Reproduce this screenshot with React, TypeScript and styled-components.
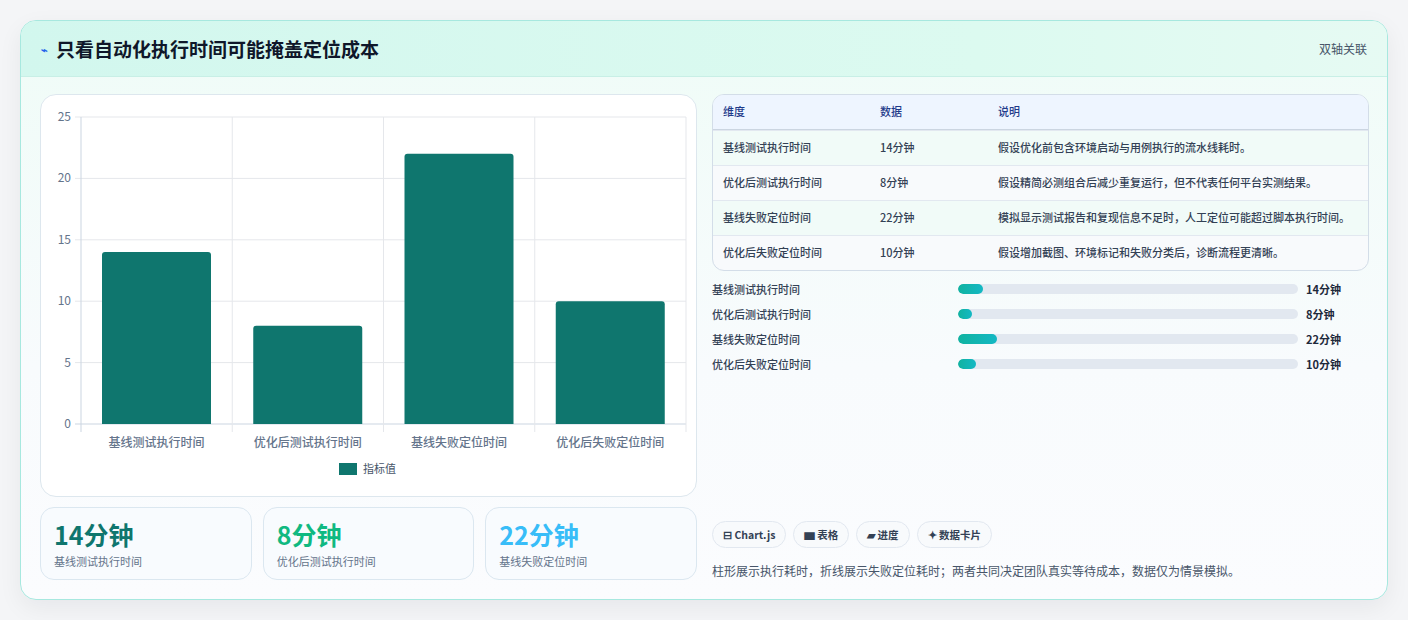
import styled, { createGlobalStyle } from 'styled-components';

const Global = createGlobalStyle`
  body {
    margin: 0;
    background: #f4f5f7;
    font-family: "Noto Sans CJK SC", "Noto Sans", sans-serif;
  }
`;

const Page = styled.div`
  padding: 20px;
  height: 620px;
  box-sizing: border-box;
`;

const Card = styled.section`
  height: 580px;
  box-sizing: border-box;
  border: 1px solid #a7e8df;
  border-radius: 16px;
  background: linear-gradient(180deg, #effcf7 0%, #f8fbfd 60%, #fbfcfe 100%);
  box-shadow: 0 8px 24px rgba(15, 23, 42, 0.06);
  overflow: hidden;
  display: flex;
  flex-direction: column;
`;

const Header = styled.header`
  height: 55px;
  flex: none;
  display: flex;
  align-items: center;
  justify-content: space-between;
  padding: 0 20px;
  background: linear-gradient(90deg, #d2f7ee 0%, #dcfaf0 70%, #e6faf3 100%);
  border-bottom: 1px solid #c8efe6;
`;

const Title = styled.h2`
  margin: 0;
  font-size: 19px;
  font-weight: 700;
  color: #0f172a;
  display: flex;
  align-items: center;
  gap: 8px;
`;

const Bolt = styled.span`
  font-size: 11px;
  color: #2563eb;
`;

const Tag = styled.span`
  font-size: 12px;
  color: #475569;
`;

const Body = styled.div`
  flex: 1;
  display: grid;
  grid-template-columns: 657px 657px;
  gap: 15px;
  padding: 17px 19px 19px 19px;
`;

const Col = styled.div`
  display: flex;
  flex-direction: column;
  gap: 10px;
  min-height: 0;
`;

const RightCol = styled(Col)`
  justify-content: space-between;
  gap: 0;
`;

const ChartCard = styled.div`
  height: 403px;
  box-sizing: border-box;
  background: #fff;
  border: 1px solid #dde7ee;
  border-radius: 16px;
`;

const Stats = styled.div`
  display: grid;
  grid-template-columns: repeat(3, 1fr);
  gap: 11px;
`;

const Stat = styled.div`
  height: 73px;
  box-sizing: border-box;
  border: 1px solid #dbe7f0;
  border-radius: 14px;
  background: #f8fbfe;
  padding: 10px 13px;
`;

const StatValue = styled.div<{ $c: string }>`
  font-size: 25px;
  font-weight: 700;
  line-height: 32px;
  color: ${(p) => p.$c};
`;

const StatLabel = styled.div`
  font-size: 11px;
  color: #64748b;
  margin-top: 3px;
`;

const Table = styled.div`
  border: 1px solid #d3dde8;
  border-radius: 12px;
  overflow: hidden;
  background: #f8fafc;
  font-size: 11px;
`;

const TRow = styled.div<{ $head?: boolean }>`
  display: grid;
  grid-template-columns: 157px 118px 1fr;
  padding: 8px 10px;
  line-height: 17px;
  min-height: 18px;
  align-items: start;
  color: ${(p) => (p.$head ? '#1e3a8a' : '#334155')};
  font-weight: ${(p) => (p.$head ? 500 : 500)};
  background: ${(p) => (p.$head ? '#eef5ff' : 'transparent')};
  border-top: ${(p) => (p.$head ? 'none' : '1px solid #e2e8f0')};
  &:nth-child(2), &:nth-child(4) { background: #f1fbf8; }
  ${(p) => p.$head && 'border-bottom: 1px solid #cbd5e1;'}
`;

const Bars = styled.div`
  margin-top: 8px;
  display: flex;
  flex-direction: column;
  gap: 6px;
`;

const BarRow = styled.div`
  display: grid;
  grid-template-columns: 246px 340px 1fr;
  gap: 0;
  align-items: center;
  height: 19px;
  font-size: 11px;
  font-weight: 500;
  color: #334155;
`;

const Track = styled.div`
  height: 10px;
  background: #e2e8f0;
  border-radius: 5px;
  overflow: hidden;
`;

const Fill = styled.div`
  height: 100%;
  border-radius: 5px;
  background: linear-gradient(90deg, #10b3a0, #14b8c4);
`;

const BarValue = styled.span`
  padding-left: 8px;
  font-weight: 700;
  color: #1e293b;
`;

const Chips = styled.div`
  display: flex;
  gap: 7px;
  margin-bottom: 14px;
`;

const Chip = styled.span`
  height: 27px;
  box-sizing: border-box;
  padding: 0 10px;
  border: 1px solid #e2e8f0;
  border-radius: 14px;
  background: #f8fafc;
  font-size: 10.5px;
  font-weight: 700;
  color: #334155;
  display: inline-flex;
  align-items: center;
  gap: 3px;
`;

const Note = styled.p`
  margin: 0 0 1px;
  font-size: 12px;
  color: #475569;
`;

const data = [
  { name: '基线测试执行时间', v: 14, note: '假设优化前包含环境启动与用例执行的流水线耗时。' },
  { name: '优化后测试执行时间', v: 8, note: '假设精简必测组合后减少重复运行，但不代表任何平台实测结果。' },
  { name: '基线失败定位时间', v: 22, note: '模拟显示测试报告和复现信息不足时，人工定位可能超过脚本执行时间。' },
  { name: '优化后失败定位时间', v: 10, note: '假设增加截图、环境标记和失败分类后，诊断流程更清晰。' },
];

function Chart() {
  const L = 40, R = 645, T = 22, B = 329;
  const y = (v: number) => B - ((B - T) * v) / 25;
  const cw = (R - L) / 4;
  return (
    <svg width="655" height="401" style={{ display: 'block' }} fontFamily='"Noto Sans CJK SC", sans-serif'>
      {[0, 5, 10, 15, 20, 25].map((t) => (
        <g key={t}>
          <line x1={L - 6} x2={R} y1={y(t)} y2={y(t)} stroke={t === 0 ? '#cbd5e1' : '#e5e7eb'} />
          <text x={L - 10} y={y(t) + 4} textAnchor="end" fontSize="12" fill="#64748b">{t}</text>
        </g>
      ))}
      {[0, 1, 2, 3, 4].map((i) => (
        <line key={i} x1={L + cw * i} x2={L + cw * i} y1={T} y2={B + 8} stroke={i === 0 ? '#cbd5e1' : '#e5e7eb'} />
      ))}
      {data.map((d, i) => (
        <g key={d.name}>
          <path
            d={`M${L + cw * i + 21} ${B} V${y(d.v) + 3} q0 -3 3 -3 H${L + cw * i + 127} q3 0 3 3 V${B} Z`}
            fill="#0f766e"
          />
          <text x={L + cw * i + cw / 2} y={B + 23} textAnchor="middle" fontSize="12" fontWeight="500" fill="#64748b">{d.name}</text>
        </g>
      ))}
      <rect x="298" y="368" width="18" height="12" fill="#0f766e" />
      <text x="322" y="378" fontSize="11" fill="#475569">指标值</text>
    </svg>
  );
}

export default function App() {
  return (
    <Page>
      <Global />
      <Card>
        <Header>
          <Title><Bolt>⌁</Bolt>只看自动化执行时间可能掩盖定位成本</Title>
          <Tag>双轴关联</Tag>
        </Header>
        <Body>
          <Col>
            <ChartCard><Chart /></ChartCard>
            <Stats>
              <Stat><StatValue $c="#0f766e">14分钟</StatValue><StatLabel>基线测试执行时间</StatLabel></Stat>
              <Stat><StatValue $c="#10b981">8分钟</StatValue><StatLabel>优化后测试执行时间</StatLabel></Stat>
              <Stat><StatValue $c="#38bdf8">22分钟</StatValue><StatLabel>基线失败定位时间</StatLabel></Stat>
            </Stats>
          </Col>
          <RightCol>
            <div>
              <Table>
                <TRow $head><span>维度</span><span>数据</span><span>说明</span></TRow>
                {data.map((d) => (
                  <TRow key={d.name}><span>{d.name}</span><span>{d.v}分钟</span><span>{d.note}</span></TRow>
                ))}
              </Table>
              <Bars>
                {data.map((d) => (
                  <BarRow key={d.name}>
                    <span>{d.name}</span>
                    <Track><Fill style={{ width: `${(d.v / 190) * 100}%` }} /></Track>
                    <BarValue>{d.v}分钟</BarValue>
                  </BarRow>
                ))}
              </Bars>
            </div>
            <div>
              <Chips>
                <Chip>⊟ Chart.js</Chip>
                <Chip>▆ 表格</Chip>
                <Chip>▰ 进度</Chip>
                <Chip>✦ 数据卡片</Chip>
              </Chips>
              <Note>柱形展示执行耗时，折线展示失败定位耗时；两者共同决定团队真实等待成本，数据仅为情景模拟。</Note>
            </div>
          </RightCol>
        </Body>
      </Card>
    </Page>
  );
}
